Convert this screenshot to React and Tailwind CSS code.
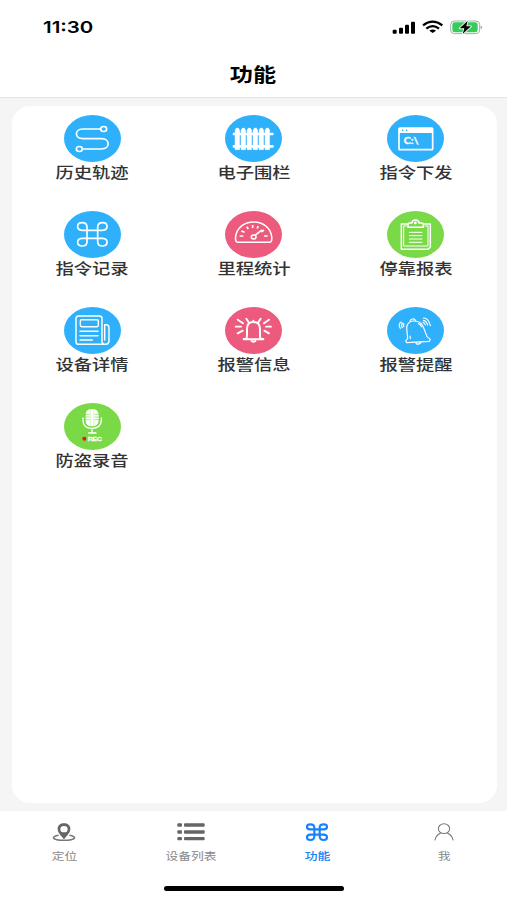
const round = { fill: 'none', stroke: '#fff', strokeLinecap: 'round', strokeLinejoin: 'round' };

const TrackIcon = () => (
  <g {...round} strokeWidth="5">
    <path d="M166 62H113C88 62 88 91 113 91H170C196 91 196 122 170 122H113" />
    <ellipse cx="176" cy="62" rx="9" ry="7.5" />
    <ellipse cx="103" cy="122" rx="9" ry="7.5" />
  </g>
);

const FenceIcon = () => (
  <g fill="#fff">
    <rect x="78" y="73" width="123" height="8" rx="3" />
    <rect x="78" y="110" width="123" height="8" rx="3" />
    {[85, 103, 121, 139, 157, 175].map((x) => (
      <path key={x} d={`M${x} 66l4-7h6l4 7v58h-14z`} strokeLinejoin="round" stroke="#fff" strokeWidth="1" />
    ))}
  </g>
);

const TerminalIcon = () => (
  <g>
    <rect x="90" y="59" width="101" height="65" rx="3" fill="none" stroke="#fff" strokeWidth="5" />
    <path d="M89 59h103v15H89z" fill="#fff" />
    <g fill="#2fb0fb">
      <circle cx="101" cy="66" r="2.5" />
      <circle cx="113" cy="66" r="2.5" />
    </g>
    <text x="104" y="107" fill="#fff" stroke="#fff" strokeWidth="1" fontSize="27" fontWeight="700" fontFamily="Lato, sans-serif" textLength="45" lengthAdjust="spacingAndGlyphs">C:\</text>
  </g>
);

const CommandIcon = () => (
  <path {...round} strokeWidth="5" d="M126 78H111C92 76 95 55 111 55C121 55 126 61 126 68V112C126 119 121 125 111 125C95 125 92 104 111 102H173C192 104 189 125 173 125C163 125 158 119 158 112V68C158 61 163 55 173 55C189 55 192 76 173 78H126" />
);

const GaugeIcon = () => (
  <g {...round} strokeWidth="4.5">
    <path d="M93 114C85 112 86 103 87 96C91 70 113 53 141 53S191 70 195 96C196 103 197 112 189 114Z" />
    <path strokeWidth="5" strokeLinecap="butt" d="M99 95h11M172 95h11M104 80l10 4M120 67l5 7M138 62v9M154 65l-2 8M172 77l-8 6" />
    <ellipse cx="141" cy="98" rx="7" ry="6" />
    <path d="M145 93L164 78" strokeWidth="5" />
  </g>
);

const ClipboardIcon = () => (
  <g {...round} strokeWidth="4.5">
    <path d="M116 59H97V135H177L184 128V59H163" />
    <path d="M112 65H104V125H177V65H168" strokeWidth="3" />
    <path d="M117 69V60Q117 56 122 56H129Q129 47 139 47T150 56H158Q163 56 163 60V69Z" />
    <circle cx="139" cy="56" r="2" />
    <path d="M121 84h38M121 94h38M121 104h38M121 114h38" strokeWidth="3" />
  </g>
);

const NewsIcon = () => (
  <g {...round} strokeWidth="4.3">
    <path d="M181 132H100Q93 132 93 124V54Q93 47 101 47H163Q171 47 171 54V123Q171 132 181 132T192 123V82Q192 73 183 73H179V119" />
    <rect x="106" y="58" width="54" height="21" rx="4" />
    <path d="M105 93h54M105 106h54M105 119h37" />
  </g>
);

const AlarmIcon = () => (
  <g {...round} strokeWidth="6">
    <path d="M111 116H117Q121 114 121 108V85Q121 65 140 65T160 85V108Q160 114 164 116H170M111 117H170" />
    <path d="M135 122Q140 126 146 122M140 61v3" />
    <path strokeWidth="5.5" d="M119 55l7 11M162 55l-7 11M93 58l16 11M187 58l-15 11M87 79h16M178 79h15M93 99l15-8M187 99l-14-8" />
  </g>
);

const ReminderIcon = () => (
  <g {...round} strokeWidth="3.5">
    <path d="M110 122L116 114L113 83C112 69 124 63 132 62C147 61 158 68 163 80L174 109L184 117L181 123L113 127Z" />
    <path d="M123 62C125 55 136 53 140 61M141 127C141 134 154 132 156 125M123 107l1 8M148 70Q155 72 158 80" />
    <path d="M94 84Q86 71 97 65M100 82Q94 74 102 68M105 79Q101 74 105 71M163 53Q178 52 184 76M163 60Q173 62 176 74M162 66Q168 68 169 74" />
  </g>
);

const RecordIcon = () => (
  <g>
    <path d="M122 55Q122 38 141 38T161 55V71Q161 90 141 90T122 71Z" fill="#fff" />
    <path stroke="#7ad947" strokeWidth="2" fill="none" d="M122 54h11M122 62h11M122 70h11M161 54h-11M161 62h-11M161 70h-11" />
    <path stroke="#7ad947" strokeWidth="1" fill="none" d="M136 39v50M147 39v50" />
    <path {...round} strokeWidth="4" d="M114 65V73Q115 96 141 96T169 73V65M141 96V109M131 110H153" />
    <circle cx="118" cy="127" r="6" fill="#e41a0c" />
    <text x="128" y="134" fill="#fff" stroke="#fff" strokeWidth="1" fontSize="18" fontWeight="700" fontFamily="Liberation Sans, sans-serif" textLength="43" lengthAdjust="spacingAndGlyphs">REC</text>
  </g>
);

const blue = 'bg-[#2fb0fb]';
const pink = 'bg-[#ec5b7e]';
const green = 'bg-[#7ad947]';

const features = [
  { label: '历史轨迹', color: blue, Icon: TrackIcon },
  { label: '电子围栏', color: blue, Icon: FenceIcon },
  { label: '指令下发', color: blue, Icon: TerminalIcon },
  { label: '指令记录', color: blue, Icon: CommandIcon },
  { label: '里程统计', color: pink, Icon: GaugeIcon },
  { label: '停靠报表', color: green, Icon: ClipboardIcon },
  { label: '设备详情', color: blue, Icon: NewsIcon },
  { label: '报警信息', color: pink, Icon: AlarmIcon },
  { label: '报警提醒', color: blue, Icon: ReminderIcon },
  { label: '防盗录音', color: green, Icon: RecordIcon },
];
const originX = [57, 55, 54];

const PinTab = () => (
  <g>
    <path fillRule="evenodd" fill="#666" d="M48 55C40 44 29 36 29 24C29 13 37 7 48 7S67 13 67 24C67 36 56 44 48 55ZM48 15A11 9.5 0 1 0 48 34A11 9.5 0 1 0 48 15Z" />
    <path fill="none" stroke="#777" strokeWidth="4.5" d="M32 43C8 46 11 58 48 58S88 46 64 43" />
  </g>
);
const ListTab = () => (
  <g fill="#666">
    {[7, 28, 48].map((y) => (
      <g key={y}>
        <rect x="7" y={y} width="14" height="10" rx="3" />
        <rect x="27" y={y} width="62" height="10" rx="3" />
      </g>
    ))}
  </g>
);
const CommandTab = () => (
  <path fill="none" stroke="#1683fb" strokeWidth="6.5" d="M40 25H28C14 24 15 10 28 10C36 10 40 14 40 20V46C40 53 36 57 28 57C15 57 14 42 28 41H68C82 42 81 57 68 57C60 57 56 53 56 46V20C56 14 60 10 68 10C81 10 82 24 68 25H40" />
);
const UserTab = () => (
  <g fill="none" stroke="#777" strokeWidth="3.2" strokeLinecap="round">
    <ellipse cx="48" cy="23" rx="17" ry="14.5" />
    <path d="M21 57Q23 44 37 37M59 37Q73 44 75 57" />
  </g>
);

const tabs = [
  { label: '定位', Icon: PinTab },
  { label: '设备列表', Icon: ListTab },
  { label: '功能', Icon: CommandTab, active: true },
  { label: '我', Icon: UserTab },
];

function StatusBar() {
  return (
    <div className="flex h-[54px] items-center justify-between pt-px pr-[23px] pl-[43px]">
      <span className="origin-left scale-x-[1.24] font-[Inter,sans-serif] text-[16.5px] leading-none font-semibold">11:30</span>
      <svg className="h-4 w-[92px]" viewBox="0 0 276 48">
        <g>
          <rect x="2" y="29" width="12" height="12" rx="3" />
          <rect x="21" y="23" width="12" height="18" rx="3" />
          <rect x="39" y="14" width="12" height="27" rx="3" />
          <rect x="57" y="5" width="12" height="36" rx="3" />
        </g>
        <g fill="none" stroke="#000" strokeWidth="7">
          <path d="M93 16Q122-6 151 16M103 26Q122 11 141 26" />
          <path d="M112 32Q122 25 132 32L122 39Z" fill="#000" stroke="none" />
        </g>
        <rect x="176" y="3" width="87" height="38" rx="11" fill="#fff" stroke="#aaa" strokeWidth="3" />
        <rect x="181" y="7" width="76" height="30" rx="7" fill="#36cb5b" />
        <path d="M266 17Q275 22 266 27Z" fill="#999" />
        <path d="M227 2L203 25H217L212 42L237 19H223Z" stroke="#fff" strokeWidth="5" paintOrder="stroke" strokeLinejoin="round" />
      </svg>
    </div>
  );
}

export default function App() {
  return (
    <div className="flex h-[900px] w-[507px] flex-col overflow-hidden bg-[#f5f5f5] font-['Noto_Sans_CJK_SC',sans-serif] text-black">
      <header className="h-[98px] shrink-0 border-b border-[#e5e5e5] bg-white">
        <StatusBar />
        <h1 className="flex h-[38px] items-center justify-center">
          <span className="scale-x-[1.22] text-[19px] leading-none font-bold">功能</span>
        </h1>
      </header>
      <main className="flex flex-1 pt-2 pr-[10.5px] pb-2 pl-[11.5px]">
        <div className="grid flex-1 auto-rows-[96px] grid-cols-3 content-start rounded-[18px] bg-white pt-[8.5px]">
          {features.map(({ label, color, Icon }, i) => (
            <div key={label} className="flex flex-col items-center">
              <div className={`h-[47px] w-[57px] rounded-[50%] ${color}`}>
                <svg className="size-full" viewBox={`${originX[i % 3]} 20 171 141`}>
                  <Icon />
                </svg>
              </div>
              <span className="mt-[2.5px] scale-x-[1.22] text-[15px] leading-4 font-medium text-[#333]">{label}</span>
            </div>
          ))}
        </div>
      </main>
      <nav className="flex h-[89px] shrink-0 flex-col items-center bg-white">
        <div className="grid h-[75px] w-full grid-cols-4 pt-[10px] pl-px">
          {tabs.map(({ label, Icon, active }) => (
            <div key={label} className="flex flex-col items-center">
              <svg className="h-[22px] w-8" viewBox="0 0 96 66">
                <Icon />
              </svg>
              <span className={`mt-[7px] scale-x-[1.22] text-[10.5px] leading-3 ${active ? 'font-medium text-[#1683fb]' : 'text-[#888]'}`}>{label}</span>
            </div>
          ))}
        </div>
        <div className="h-[5px] w-[180px] rounded-full bg-black" />
      </nav>
    </div>
  );
}
